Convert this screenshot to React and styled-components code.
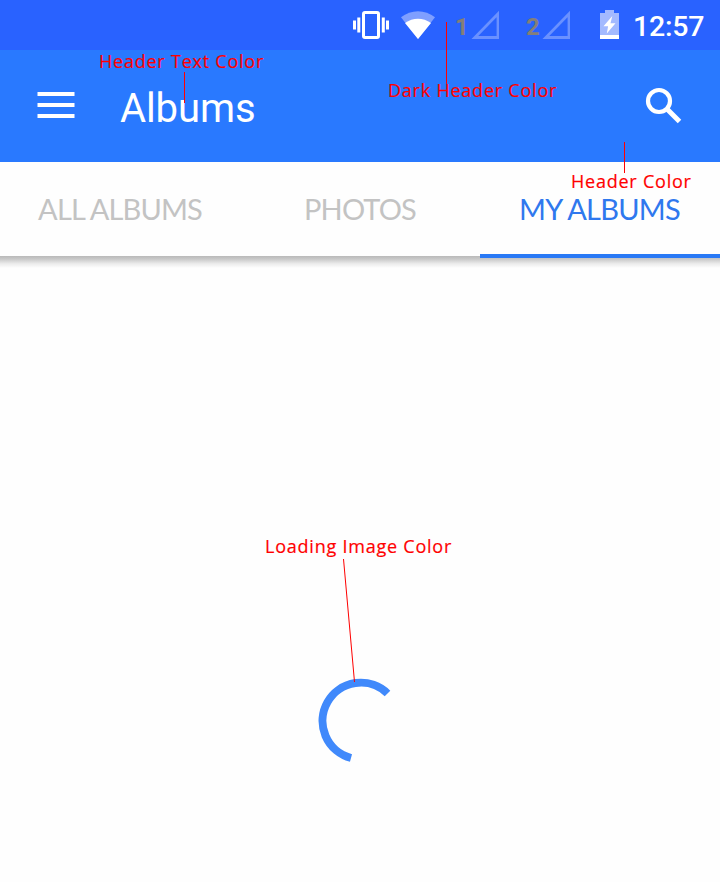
import React from "react";
import styled, { createGlobalStyle } from "styled-components";

const GlobalStyle = createGlobalStyle`
  *, *::before, *::after { box-sizing: border-box; }
  body { margin: 0; background: #fefefe; }
`;

const Screen = styled.div`
  position: relative;
  width: 720px;
  height: 882px;
  display: flex;
  flex-direction: column;
  overflow: hidden;
  background: #fefefe;
  font-family: Roboto, sans-serif;
`;

const StatusBar = styled.header`
  height: 50px;
  flex: none;
  display: flex;
  align-items: center;
  justify-content: flex-end;
  padding-right: 15px;
  background: #2962ff;
`;

const StatusIcon = styled.svg`
  display: block;
  flex: none;
  margin-right: ${(p) => p.$gap}px;
`;

const SimNumber = styled.span`
  width: 16px;
  padding-top: 3px;
  font: 700 24px/30px Roboto, sans-serif;
  color: #857f78;
`;

const Clock = styled.time`
  width: 72px;
  padding-top: 3px;
  font: 500 28.5px/30px Roboto, sans-serif;
  letter-spacing: -0.2px;
  color: #fff;
  white-space: nowrap;
`;

const AppBar = styled.div`
  height: 112px;
  flex: none;
  display: flex;
  align-items: center;
  padding: 0 38px 0 37px;
  background: #2979ff;
`;

const Title = styled.h1`
  flex: 1;
  margin: 5px 0 0 45px;
  font: 400 40px/48px Roboto, sans-serif;
  letter-spacing: -0.1px;
  color: #fff;
`;

const IconButton = styled.button`
  display: flex;
  padding: 0;
  border: 0;
  background: none;
`;

const Tabs = styled.nav`
  height: 94px;
  flex: none;
  display: grid;
  grid-template-columns: repeat(3, 1fr);
`;

const Tab = styled.a`
  display: flex;
  align-items: center;
  justify-content: center;
  padding-top: 2px;
  font: 400 29px/36px Lato, sans-serif;
  letter-spacing: ${(p) => (p.$active ? -0.75 : -0.85)}px;
  padding-right: ${(p) => (p.$active ? 1 : 0)}px;
  color: ${(p) => (p.$active ? "#2f78ee" : "#c3c3c3")};
  border-bottom: 2px solid ${(p) => (p.$active ? "#2979f5" : "transparent")};
`;

const TabShadow = styled.div`
  height: 12px;
  flex: none;
  background: linear-gradient(#b9b9b9, #c8c8c8 25%, #ececec 65%, #fefefe);
  &::before {
    content: "";
    display: block;
    width: 240px;
    height: 2px;
    margin-left: auto;
    background: #2979f5;
  }
`;

const Content = styled.main`
  flex: 1;
  display: flex;
  justify-content: center;
  align-items: flex-start;
  padding: 410px 2px 0 0;
`;

const Overlay = styled.svg`
  position: absolute;
  inset: 0;
  pointer-events: none;
`;

const Note = styled.span`
  position: absolute;
  left: ${(p) => p.$x}px;
  top: ${(p) => p.$y}px;
  font: 400 19px/24px "Open Sans", sans-serif;
  letter-spacing: 0.82px;
  color: #f00;
  -webkit-text-stroke: 0.2px #f00;
  white-space: nowrap;
  transform: scaleX(0.947);
  transform-origin: left;
`;

const Signal = ({ gap }) => (
  <StatusIcon $gap={gap} width="28" height="30" viewBox="0 0 28 30">
    <path d="M3.8 27.5H27V3.8Z" fill="none" stroke="#6a91ff" strokeWidth="2.8" />
  </StatusIcon>
);

const notes = [
  { text: "Header Text Color", x: 98.5, y: 49 },
  { text: "Dark Header Color", x: 387.5, y: 78 },
  { text: "Header Color", x: 570.5, y: 169 },
  { text: "Loading Image Color", x: 264.5, y: 534 },
];

export default function App() {
  return (
    <Screen>
      <GlobalStyle />
      <StatusBar>
        <StatusIcon $gap={12} width="36" height="30" viewBox="0 0 36 30">
          <rect x="10.5" y="2.5" width="15" height="25" rx="1.5" fill="none" stroke="#fff" strokeWidth="3" />
          <path d="M0 10.5h3v9H0zM4.3 7.5h3v15h-3zM28.8 7.5h3v15h-3zM33 10.5h3v9h-3z" fill="#fff" />
        </StatusIcon>
        <StatusIcon $gap={20} width="34" height="30" viewBox="0 0 34 30">
          <path d="M0 7.2C10 -.9 24 -.9 34 7.2L17 29Z" fill="#7f9fff" />
          <path d="M4 13C12 7.2 22 7.2 30 13L17 29Z" fill="#fff" />
        </StatusIcon>
        <SimNumber>1</SimNumber>
        <Signal gap={27} />
        <SimNumber>2</SimNumber>
        <Signal gap={30} />
        <StatusIcon $gap={14} width="19" height="30" viewBox="0 0 19 30">
          <path d="M5 0h9v3h5v23H0V3h5Z" fill="#a3baff" />
          <path d="M0 25h19v4H0Z" fill="#fff" />
          <path d="M12.3 6L3.5 16.3h4.6L6.8 23.5L15.5 13.2h-5Z" fill="#fff" />
        </StatusIcon>
        <Clock>12:57</Clock>
      </StatusBar>
      <AppBar>
        <IconButton aria-label="Menu">
          <svg width="38" height="28" viewBox="0 0 38 28">
            <path d="M.5 0h37v4H.5zM.5 11h37v4H.5zM.5 22h37v4H.5z" fill="#fff" />
          </svg>
        </IconButton>
        <Title>Albums</Title>
        <IconButton aria-label="Search">
          <svg width="37" height="38" viewBox="0 0 37 38">
            <circle cx="14" cy="14" r="11" fill="none" stroke="#fff" strokeWidth="4.2" />
            <path d="M22.5 22.5L34.5 34.5" fill="none" stroke="#fff" strokeWidth="5" />
          </svg>
        </IconButton>
      </AppBar>
      <Tabs>
        <Tab>ALL ALBUMS</Tab>
        <Tab>PHOTOS</Tab>
        <Tab $active>MY ALBUMS</Tab>
      </Tabs>
      <TabShadow />
      <Content>
        <svg width="84" height="84" viewBox="0 0 84 84" aria-label="Loading">
          <path d="M70.5 15.5A38.3 38.3 0 1 0 34 80" fill="none" stroke="#4089fb" strokeWidth="8" />
        </svg>
      </Content>
      <Overlay width="720" height="882" viewBox="0 0 720 882" stroke="#f00" fill="none">
        <path d="M184.5 72V103M446.5 22V84M624.5 142V173M343.5 559L354.5 682" />
      </Overlay>
      {notes.map((n) => (
        <Note key={n.text} $x={n.x} $y={n.y}>{n.text}</Note>
      ))}
    </Screen>
  );
}
